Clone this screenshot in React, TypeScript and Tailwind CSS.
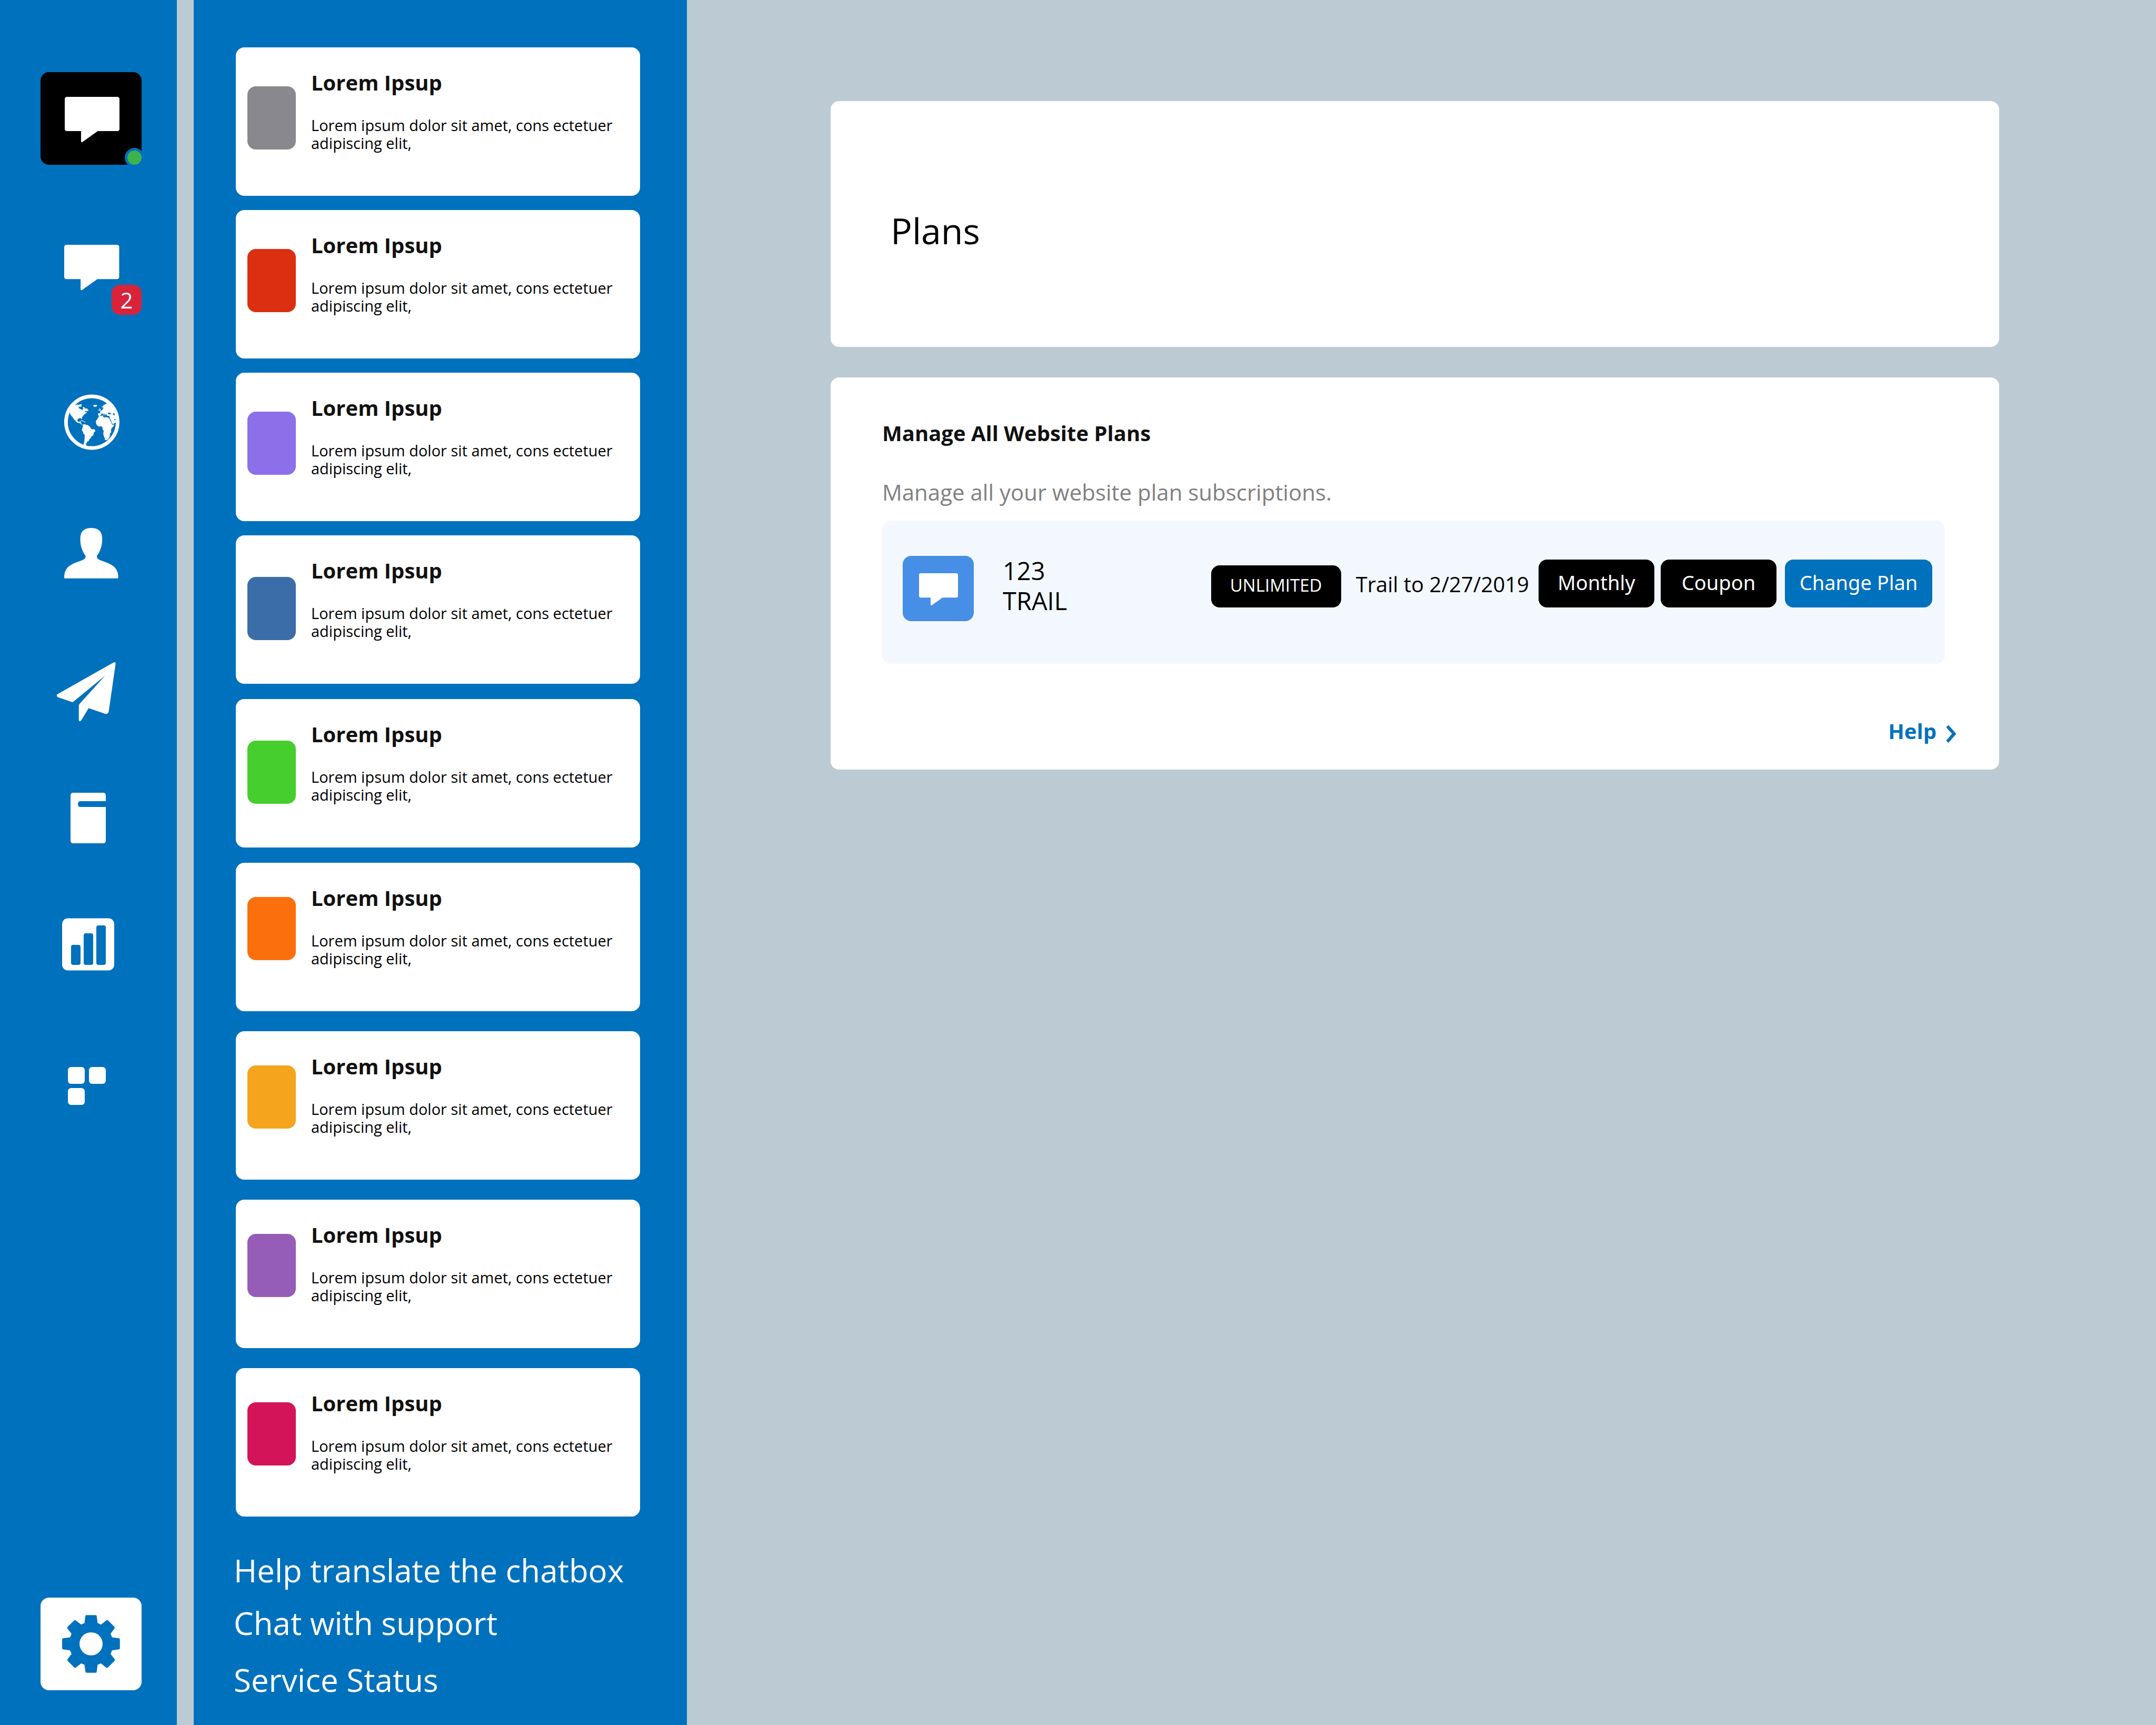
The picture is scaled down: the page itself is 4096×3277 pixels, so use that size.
import type { ReactNode } from "react";

const BUBBLE =
  "M6 0H130Q136 0 136 6V79Q136 85 130 85H82L44 112Q40.500 113.500 40.500 110V85H6Q0 85 0 79V6Q0 0 6 0Z";

function Bubble({ className }: { className: string }) {
  return (
    <svg viewBox="0 0 136 113" className={className} fill="white" aria-hidden="true">
      <path d={BUBBLE} />
    </svg>
  );
}

function NavIcon({ children }: { children: ReactNode }) {
  return (
    <svg viewBox="0 0 132 116" className="h-[116px] w-[132px]" fill="white" aria-hidden="true">
      {children}
    </svg>
  );
}

function ChatIcon() {
  return (
    <NavIcon>
      <g transform="translate(15 15) scale(0.768)">
        <path d={BUBBLE} />
      </g>
    </NavIcon>
  );
}

function EarthIcon() {
  return (
    <NavIcon>
      <g transform="translate(9.7 0.5) scale(0.256)">
        <circle cx="225.500" cy="224.500" r="191.500" fill="none" stroke="white" strokeWidth="27" />
        {/* North and Central America */}
        <path d="M50 142L98 98L106 97L112 100L116 101L109 96L118 94L126 96L132 98L134 92L149 92L151 97L142 101L151 104L149 109L136 109L127 113L128 119L139 127L151 130L154 138L158 135L158 127L164 122L157 117L164 111L172 116L175 124L190 122L196 132L203 134L198 141L184 143L175 142L172 147L176 150L186 146L189 155L180 156L181 160L170 166L160 180L152 188L153 203L149 201L146 196L134 195L123 199L119 206L120 217L128 223L136 221L140 216L145 217L141 228L148 230L149 240L158 245L166 240L176 240L174 248L158 250L148 243L143 235L132 231L118 228L108 221L101 210L86 190L82 186L72 176L64 162L62 146Z" />
        <path d="M88 190L98 203L103 207L100 210L92 203L85 191Z" />
        <path d="M144 212L154 211L166 217L166 220L156 217L144 215ZM162 222L170 220L180 223L178 226L168 225Z" />
        {/* South America */}
        <path d="M162 246L172 239L178 241L186 246L196 245L202 252L210 255L215 262L218 272L230 277L242 276L250 281L251 291L246 298L240 301L238 318L232 326L224 329L218 342L208 352L202 364L189 370L188 380L181 384L184 390L182 398L188 405H162L166 384L171 358L173 318L161 308L162 298L153 288L152 280L156 272L154 264L160 262Z" />
        <path d="M240 96H260Q264 97 264 103Q263 109 256 110H242Q236 109 237 103Q237 98 240 96Z" />
        {/* Africa */}
        <path d="M278 182L288 178L305 176L310 178L309 186L322 190L330 187L352 192L358 204L366 220L376 242L392 243L388 254L372 270L368 282L370 298L360 310L360 322L355 338L345 353L332 358L324 356L321 344L312 320L311 306L314 290L306 280L304 262L298 255L280 258L266 250L257 236L256 216L266 202Z" />
        {/* Europe, the Near East and the British Isles */}
        <path
          fillRule="evenodd"
          d="M350 82L312 98L308 106L299 110L299 117L307 113L314 120L306 124L306 132L296 138L287 146L288 158L276 158L272 162L272 174L278 179L286 178L296 166L298 158L304 159L313 170L314 176L318 171L312 162L316 160L322 168L326 174L330 170L328 163L334 166L337 175L342 178H356L357 190L366 208L377 236L386 237L404 226L416 210L408 150L390 120ZM346 154L354 153L368 158L370 164L362 166L346 165ZM381 162L388 157L402 160L398 168L402 172L396 176L386 170L381 166ZM392 203L398 199L404 205L398 210L392 207Z"
        />
        <path d="M282 121L288 124L289 132L293 136L286 141L278 140L282 135ZM272 133L279 132L277 138L271 138Z" />
      </g>
    </NavIcon>
  );
}

function PersonIcon() {
  return (
    <NavIcon>
      <g transform="translate(15 10) scale(0.768)">
        <path d="M66.800 0C47 0 39.700 10 39.700 27.600C39.700 46 46 60 53 69C53 75 50 77 46 79C30 85 17 89 9 97C2 105 0 113 0 122Q0 124.600 1 124.600H132.600Q133.700 124.600 133.700 122C133.700 113 131.700 105 124.700 97C116.700 89 103.700 85 87.700 79C83.700 77 80.700 75 80.700 69C87.700 60 94 46 94 27.600C94 10 86.600 0 66.800 0Z" />
      </g>
    </NavIcon>
  );
}

function PlaneIcon() {
  return (
    <NavIcon>
      <g transform="translate(0.5 2) scale(0.768)">
        <path d="M141 0.500Q146.500 -1 146 4L129 122Q127.500 128.500 121 128L79.300 113.600L61 144Q55 149 55 142.500V108Q55 105.500 56.500 103.500L120 33.300L42 97.400Q40 99.200 37.500 98.400L3 86.700Q-1.500 83 1.700 79.500Z" />
      </g>
    </NavIcon>
  );
}

function BookIcon() {
  return (
    <NavIcon>
      <path d="M32 10H89Q94 10 94 15V26H46Q41 26 41 31.500T46 37H94V101Q94 106 89 106H32Q27 106 27 101V15Q27 10 32 10Z" />
    </NavIcon>
  );
}

function ChartIcon() {
  return (
    <NavIcon>
      <rect x="11" y="8.500" width="99" height="99" rx="11" />
      <g fill="#0071bd">
        <rect x="28" y="59" width="18" height="38" rx="4" />
        <rect x="52" y="37" width="18" height="60" rx="4" />
        <rect x="76" y="22" width="18" height="75" rx="4" />
      </g>
    </NavIcon>
  );
}

function TilesIcon() {
  return (
    <NavIcon>
      <rect x="22" y="22" width="32" height="32" rx="6" />
      <rect x="62" y="22" width="32" height="32" rx="6" />
      <rect x="22" y="62" width="32" height="32" rx="6" />
    </NavIcon>
  );
}

function GearIcon() {
  return (
    <svg viewBox="42 46 429 429" className="size-[110px]" fill="#0071bd" aria-hidden="true">
      <path
        fillRule="evenodd"
        d="M222 47H291Q297 47 298 53L305 105L330 117L370 86Q376 81 382 86L428 132Q434 139 430 146L401 185L412 212L464 219Q470 221 470 228V292Q470 299 464 300L412 308L401 335L432 374Q434 380 430 386L382 434Q376 440 369 436L330 405L305 415L298 468Q296 474 290 474H223Q216 474 215 467L208 415L183 405L143 436Q136 439 131 434L84 387Q78 380 83 373L112 335L101 308L48 300Q42 298 42 292V228Q42 221 49 219L101 212L112 185L82 147Q78 140 83 133L131 87Q136 82 143 86L183 117L208 105L214 55Q216 47 222 47ZM256.500 174.500A85.500 85.500 0 1 0 256.500 345.500A85.500 85.500 0 1 0 256.500 174.500Z"
      />
    </svg>
  );
}

const navItems = [
  { label: "Visitors", icon: <EarthIcon />, space: "mt-[178px]" },
  { label: "Contacts", icon: <PersonIcon />, space: "mt-[133px]" },
  { label: "Campaigns", icon: <PlaneIcon />, space: "mt-[147px]" },
  { label: "Helpdesk", icon: <BookIcon />, space: "mt-[124px]" },
  { label: "Analytics", icon: <ChartIcon />, space: "mt-[124px]" },
  { label: "Plugins", icon: <TilesIcon />, space: "mt-[153px]" },
];

const cards = [
  { swatch: "bg-[#89888e]", space: "", drop: "pt-[74px]" },
  { swatch: "bg-[#da2f11]", space: "mt-[27px]", drop: "pt-[74px]" },
  { swatch: "bg-[#8c70e9]", space: "mt-[27px]", drop: "pt-[74px]" },
  { swatch: "bg-[#3b6da8]", space: "mt-[27px]", drop: "pt-[79px]" },
  { swatch: "bg-[#46ce2e]", space: "mt-[29px]", drop: "pt-[79px]" },
  { swatch: "bg-[#fb6f0d]", space: "mt-[29px]", drop: "pt-[65px]" },
  { swatch: "bg-[#f5a41e]", space: "mt-[38px]", drop: "pt-[65px]" },
  { swatch: "bg-[#955db8]", space: "mt-[38px]", drop: "pt-[65px]" },
  { swatch: "bg-[#d31458]", space: "mt-[38px]", drop: "pt-[65px]" },
];

const actionClass =
  "h-[91px] rounded-2xl pb-1 text-[38px] text-white font-['Noto_Sans','Open_Sans',sans-serif]";

export default function App() {
  return (
    <div className="flex min-h-screen bg-[#bccad3] font-['Open_Sans',sans-serif] text-black">
      <nav className="flex w-[336px] shrink-0 flex-col bg-[#0071bd] pb-[66px] pl-[77px] pt-[137px]">
        <button type="button" aria-label="Inbox" className="relative flex h-44 w-48 items-center justify-center rounded-2xl bg-black pl-[3px]">
          <Bubble className="mt-1 w-[104px]" />
          <span className="absolute bottom-0 right-0 size-[27px] rounded-full bg-[#3cb44c] ring-[5px] ring-[#0071bd]" />
        </button>
        <button type="button" aria-label="Chats, 2 unread" className="relative mt-[137px] flex w-48 justify-center">
          <ChatIcon />
          <span className="absolute -bottom-8 right-0 flex size-[57px] items-center justify-center rounded-2xl bg-[#d9233b] text-[42px] leading-none text-white">
            2
          </span>
        </button>
        {navItems.map((item) => (
          <button key={item.label} type="button" aria-label={item.label} className={`flex w-48 justify-center ${item.space}`}>
            {item.icon}
          </button>
        ))}
        <button type="button" aria-label="Settings" className="mt-auto flex h-44 w-48 items-center justify-center rounded-2xl bg-white">
          <GearIcon />
        </button>
      </nav>

      <aside className="ml-8 w-[937px] shrink-0 bg-[#0071bd] pl-[76px] pr-[89px] pt-[90px]">
        <ul className="pl-1">
          {cards.map((card) => (
            <li key={card.swatch} className={`flex h-[282px] rounded-2xl bg-white pl-[22px] ${card.space}`}>
              <div className={card.drop}>
                <div className={`h-[120px] w-[92px] rounded-2xl ${card.swatch}`} />
              </div>
              <div className="ml-[29px] pt-[39px]">
                <h2 className="text-[40px] font-bold leading-[56px] text-[#111111]">Lorem Ipsup</h2>
                <p className="mt-9 w-[600px] text-[29px] leading-[34px]">
                  Lorem ipsum dolor sit amet, cons ectetuer adipiscing elit,
                </p>
              </div>
            </li>
          ))}
        </ul>
        <div className="mt-[62px] flex flex-col items-start text-[60px] leading-[80px] text-white">
          <a href="#translate">Help translate the chatbox</a>
          <a href="#support" className="mt-5">Chat with support</a>
          <a href="#status" className="mt-7">Service Status</a>
        </div>
      </aside>

      <main className="flex-1 pl-[273px] pr-[298px] pt-48">
        <header className="rounded-2xl bg-white pb-[175px] pl-[114px] pt-[200px]">
          <h1 className="text-[68px] leading-[92px]">Plans</h1>
        </header>

        <section className="mt-[58px] rounded-2xl bg-white pb-[45px] pl-[98px] pt-[78px]">
          <h2 className="text-[40px] font-bold leading-[56px] text-[#111111]">Manage All Website Plans</h2>
          <p className="mt-14 text-[42px] leading-[56px] text-[#808080]">Manage all your website plan subscriptions.</p>

          <div className="mr-[103px] mt-[26px] flex h-[272px] items-start rounded-2xl bg-[#f3f8ff] pl-[39px] pr-6 pt-[67px]">
            <div className="flex h-[124px] w-[135px] items-center justify-center rounded-2xl bg-[#478ee6]">
              <Bubble className="mt-1 w-[74px]" />
            </div>
            <p className="ml-[55px] text-[47px] leading-[57px]">
              123
              <br />
              TRAIL
            </p>
            <div className="ml-auto mt-[7px] flex items-end">
              <button type="button" className="h-20 w-[247px] rounded-2xl bg-black pb-1 text-[33px] text-white">
                UNLIMITED
              </button>
              <span className="ml-7 pb-4 text-[40px] leading-[56px]">Trail to 2/27/2019</span>
              <button type="button" className={`ml-[18px] w-[220px] bg-black ${actionClass}`}>Monthly</button>
              <button type="button" className={`ml-3 w-[220px] bg-black ${actionClass}`}>Coupon</button>
              <button type="button" className={`ml-4 w-[280px] bg-[#0071bd] ${actionClass}`}>Change Plan</button>
            </div>
          </div>

          <div className="mt-[100px] flex justify-end pr-[81px]">
            <a href="#help" className="flex items-center gap-[18px] text-[40px] font-bold leading-[56px] text-[#0071bd]">
              Help
              <svg viewBox="0 0 20 44" className="h-11 w-5" fill="none" stroke="#0071bd" strokeWidth="6" aria-hidden="true">
                <path d="M2.500 12.500L15.500 27L2.500 42" />
              </svg>
            </a>
          </div>
        </section>
      </main>
    </div>
  );
}
